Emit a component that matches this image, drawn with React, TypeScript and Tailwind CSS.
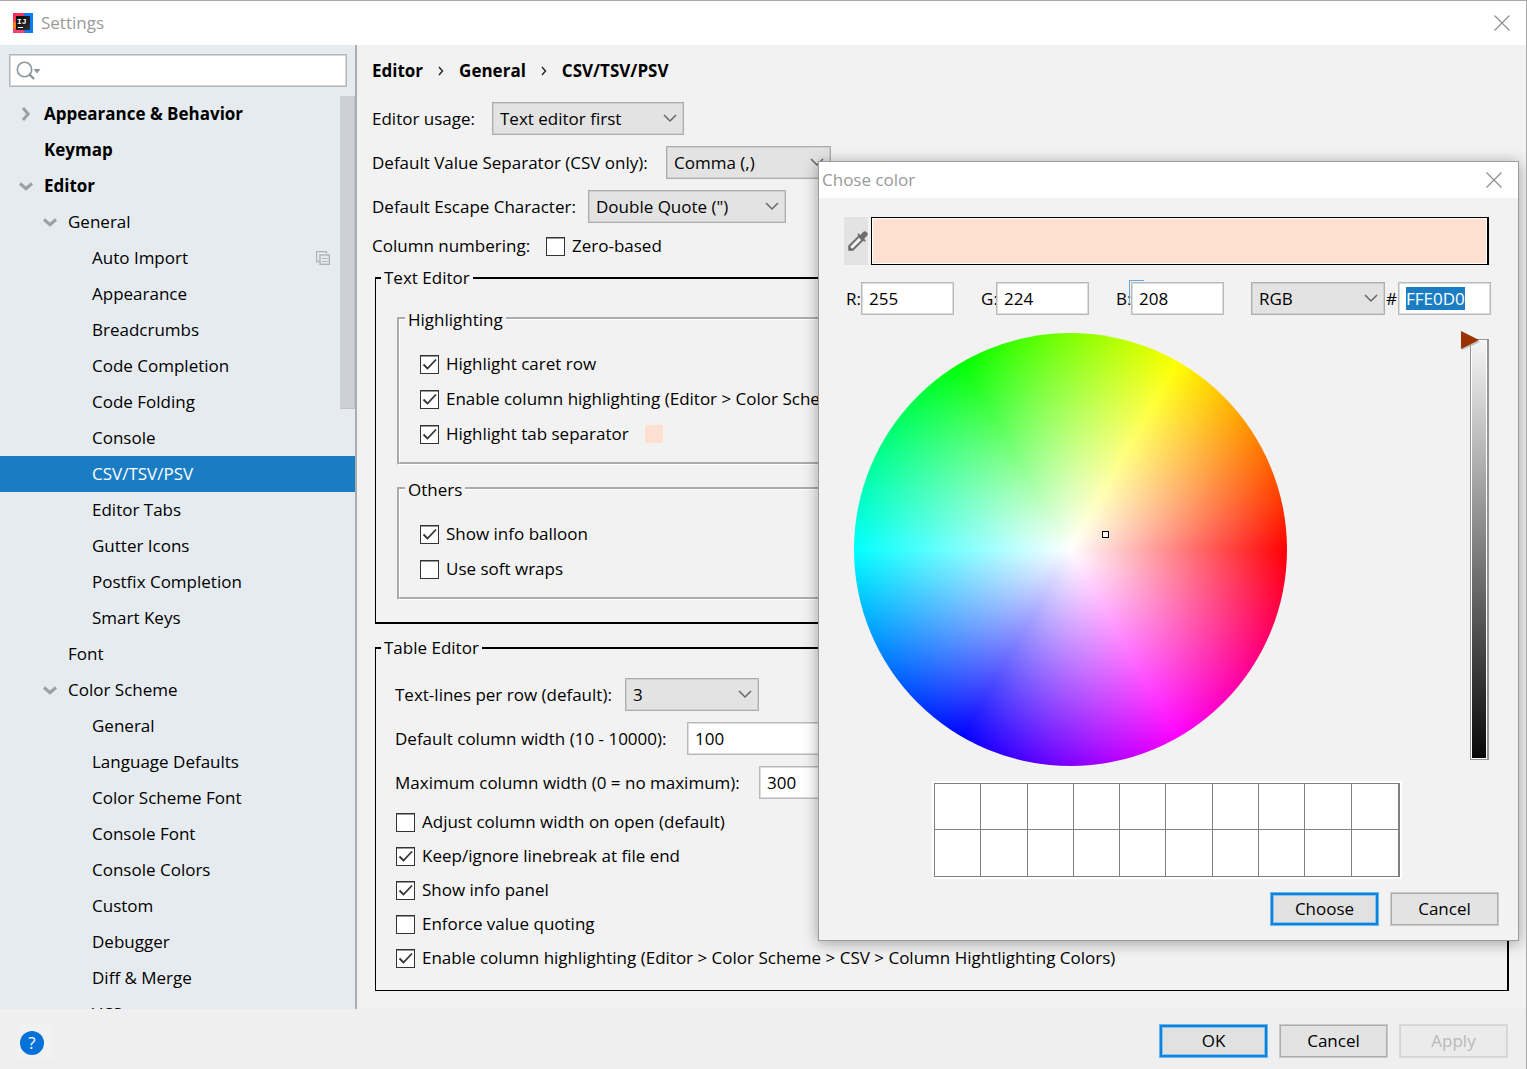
import { useEffect, useRef, type ReactNode } from "react";

type TreeItem = {
  label: string;
  level: 0 | 1 | 2;
  bold?: boolean;
  state?: "open" | "closed";
  selected?: boolean;
  copy?: boolean;
};

const tree: TreeItem[] = [
  { label: "Appearance & Behavior", level: 0, bold: true, state: "closed" },
  { label: "Keymap", level: 0, bold: true },
  { label: "Editor", level: 0, bold: true, state: "open" },
  { label: "General", level: 1, state: "open" },
  { label: "Auto Import", level: 2, copy: true },
  { label: "Appearance", level: 2 },
  { label: "Breadcrumbs", level: 2 },
  { label: "Code Completion", level: 2 },
  { label: "Code Folding", level: 2 },
  { label: "Console", level: 2 },
  { label: "CSV/TSV/PSV", level: 2, selected: true },
  { label: "Editor Tabs", level: 2 },
  { label: "Gutter Icons", level: 2 },
  { label: "Postfix Completion", level: 2 },
  { label: "Smart Keys", level: 2 },
  { label: "Font", level: 1 },
  { label: "Color Scheme", level: 1, state: "open" },
  { label: "General", level: 2 },
  { label: "Language Defaults", level: 2 },
  { label: "Color Scheme Font", level: 2 },
  { label: "Console Font", level: 2 },
  { label: "Console Colors", level: 2 },
  { label: "Custom", level: 2 },
  { label: "Debugger", level: 2 },
  { label: "Diff & Merge", level: 2 },
  { label: "VCS", level: 2 },
];

const indent = { 0: "pl-[14px]", 1: "pl-[38px]", 2: "pl-[62px]" };

function Logo() {
  return (
    <svg width="20" height="20" viewBox="0 0 20 20" aria-hidden="true">
      <defs>
        <linearGradient id="logoInk" x1="0" y1="0" x2="1" y2="1">
          <stop offset="0" stopColor="#000" />
          <stop offset="1" stopColor="#333" />
        </linearGradient>
      </defs>
      <rect width="20" height="20" fill="#087cfa" />
      <path d="M0 0h12l-3 5-5 6-4 1z" fill="#fe315d" />
      <path d="M0 8l4 2v6l-4 1z" fill="#f97a12" />
      <path d="M0 16l4-1 7 2 1 3H0z" fill="#f0426f" />
      <rect x="3" y="3" width="14" height="14" fill="url(#logoInk)" />
      <text x="4" y="11" fontFamily="Liberation Mono, monospace" fontWeight="700" fontSize="8" fill="#fff">
        IJ
      </text>
      <rect x="5" y="14" width="5" height="1" fill="#fff" />
    </svg>
  );
}

function CloseIcon() {
  return (
    <svg width="16" height="16" viewBox="0 0 16 16" aria-hidden="true">
      <path d="M.5.5l15 15M15.5.5l-15 15" stroke="#8b8b8b" strokeWidth="1.1" fill="none" />
    </svg>
  );
}

function Arrow({ state }: { state: "open" | "closed" }) {
  return (
    <svg width="14" height="14" viewBox="0 0 14 14" aria-hidden="true" fill="none" stroke="#9b9fa2" strokeWidth="3">
      {state === "open" ? <path d="M1 4.500l6 5.200 6-5.200" /> : <path d="M4 1l5.200 6L4 13" />}
    </svg>
  );
}

function SelectBox({ id, value, width, label }: { id: string; value: string; width: string; label?: string }) {
  return (
    <span className={`relative flex shrink-0 ${width}`}>
      <select
        id={id}
        aria-label={label}
        defaultValue={value}
        className="h-[33px] w-full appearance-none border border-[#adadad] bg-[#e3e3e3] pl-[7px] shadow-[inset_0_0_0_1px_#cfcfcf] outline-none"
      >
        <option>{value}</option>
      </select>
      <svg className="pointer-events-none absolute right-[7px] top-3" width="14" height="9" viewBox="0 0 14 9" aria-hidden="true">
        <path d="M1 1l6 6 6-6" fill="none" stroke="#666" strokeWidth="1.5" />
      </svg>
    </span>
  );
}

function Check({ label, checked }: { label: string; checked?: boolean }) {
  return (
    <label className="flex h-6 items-center gap-[7px] whitespace-nowrap">
      <span className="relative flex">
        <input
          type="checkbox"
          defaultChecked={checked}
          className="peer size-[19px] appearance-none border border-[#333] bg-white shadow-[inset_0_1px_0_#999]"
        />
        <svg
          className="pointer-events-none absolute inset-0 hidden peer-checked:block"
          width="19"
          height="19"
          viewBox="0 0 19 19"
          aria-hidden="true"
        >
          <path d="M3.5 9.5l4 4L16 4.5" fill="none" stroke="#333" strokeWidth="1.8" />
        </svg>
      </span>
      {label}
    </label>
  );
}

function TextField({ id, value, width }: { id: string; value: string; width: string }) {
  return (
    <input
      id={id}
      type="text"
      defaultValue={value}
      className={`h-[33px] shrink-0 border border-[#b9b9b9] bg-white pl-[7px] shadow-[inset_0_0_0_1px_#dcdcdc] outline-none ${width}`}
    />
  );
}

function PushButton({ children, primary, disabled }: { children: ReactNode; primary?: boolean; disabled?: boolean }) {
  const look = primary
    ? "border-[#6fb4ea] bg-[#e1e1e1] shadow-[inset_0_0_0_2px_#0a84e0,inset_0_0_0_3px_#8fc1e8]"
    : disabled
      ? "border-[#dadada] bg-[#ebebeb] text-[#b9b9b9] shadow-[inset_0_0_0_1px_#d4d4d4]"
      : "border-[#c9c9c9] bg-[#e3e3e3] shadow-[inset_0_0_0_1px_#adadad]";
  return (
    <button type="button" disabled={disabled} className={`h-[34px] w-[109px] border leading-6 ${look}`}>
      {children}
    </button>
  );
}

function InnerGroup({ title, children }: { title: string; children: ReactNode }) {
  return (
    <fieldset className="mr-[21px] border-[3px] border-white [border-style:groove]">
      <legend className="ml-[5px] px-[3px] pt-1">{title}</legend>
      <div className="flex flex-col gap-[11px] pb-4 pl-5 pt-5">{children}</div>
    </fieldset>
  );
}

function Sidebar() {
  return (
    <aside className="relative flex w-[357px] shrink-0 flex-col overflow-hidden border-r-2 border-[#abadb0] bg-[#e6ebef] pt-[9px]">
      <div className="relative ml-[9px] mr-2 flex">
        <input
          type="search"
          aria-label="Search settings"
          className="h-[33px] w-full appearance-none border border-[#b5b8ba] bg-white pl-10 shadow-[inset_0_0_0_1px_#d4d6d8] outline-none"
        />
        <svg
          className="pointer-events-none absolute left-[7px] top-[7px]"
          width="26"
          height="20"
          viewBox="0 0 26 20"
          aria-hidden="true"
        >
          <circle cx="8.5" cy="8.5" r="7.2" fill="none" stroke="#8d979e" strokeWidth="1.6" />
          <path d="M13 13l5 5" stroke="#8d979e" strokeWidth="2.4" />
          <path d="M17.500 8h7l-3.500 4.500z" fill="#8d979e" />
        </svg>
      </div>
      <ul className="mt-[9px]">
        {tree.map((item, i) => (
          <li key={i}>
            <button
              type="button"
              className={`flex h-9 w-full items-center gap-[6px] pr-[25px] text-left ${indent[item.level]} ${
                item.selected ? "bg-[#1a7dc4] text-white" : ""
              } ${item.bold ? "font-bold" : ""}`}
            >
              <span className="flex w-6 shrink-0 justify-center">{item.state && <Arrow state={item.state} />}</span>
              <span className="grow">{item.label}</span>
              {item.copy && (
                <svg width="14" height="14" viewBox="0 0 14 14" fill="none" stroke="#a9b4bb" aria-hidden="true">
                  <path d="M3.500 10.500h-3v-10h10v2" strokeWidth="1.400" />
                  <rect x="4" y="4" width="9.300" height="9.300" strokeWidth="1.400" />
                  <path d="M6 7.500h5.500M6 10.500h5.500" strokeWidth="1.200" />
                </svg>
              )}
            </button>
          </li>
        ))}
      </ul>
      <div className="absolute right-0 top-[51px] h-[313px] w-[15px] border-b border-r border-[#bfc2c7] bg-[#cdd0d6]" />
    </aside>
  );
}

function SettingsPanel() {
  return (
    <main className="min-w-0 grow overflow-hidden bg-[#f2f2f2] pl-[15px] pr-[17px] pt-[14px]">
      <nav aria-label="Breadcrumb" className="flex h-6 items-center gap-[15px] font-bold">
        {["Editor", "General", "CSV/TSV/PSV"].map((c, i) => (
          <span key={c} className="flex items-center gap-[15px]">
            {i > 0 && (
              <svg width="6" height="10" viewBox="0 0 6 10" aria-hidden="true">
                <path d="M1 1l3.500 4L1 9" fill="none" stroke="#222" strokeWidth="1.400" />
              </svg>
            )}
            {c}
          </span>
        ))}
      </nav>

      <div className="mt-[19px] flex flex-col gap-[11px] whitespace-nowrap">
        <div className="flex items-center">
          <label htmlFor="usage" className="w-[120px] shrink-0">Editor usage:</label>
          <SelectBox id="usage" value="Text editor first" width="w-[192px]" />
        </div>
        <div className="flex items-center">
          <label htmlFor="separator" className="w-[294px] shrink-0">Default Value Separator (CSV only):</label>
          <SelectBox id="separator" value="Comma (,)" width="w-[165px]" />
        </div>
        <div className="flex items-center">
          <label htmlFor="escape" className="w-[216px] shrink-0">Default Escape Character:</label>
          <SelectBox id="escape" value={'Double Quote (")'} width="w-[198px]" />
        </div>
        <div className="flex items-center">
          <span className="w-[174px] shrink-0">Column numbering:</span>
          <Check label="Zero-based" />
        </div>
      </div>

      <fieldset className="ml-[3px] mt-2 border-2 border-l border-black">
        <legend className="ml-[5px] px-[3px]">Text Editor</legend>
        <div className="flex flex-col gap-[9px] pb-[22px] pl-[21px] pt-[14px]">
          <InnerGroup title="Highlighting">
            <Check label="Highlight caret row" checked />
            <Check label="Enable column highlighting (Editor > Color Scheme > CSV > Column Hightlighting Colors)" checked />
            <div className="flex items-center gap-4">
              <Check label="Highlight tab separator" checked />
              <button type="button" aria-label="Tab separator color" className="size-[18px] bg-[#ffdfd0]" />
            </div>
          </InnerGroup>
          <InnerGroup title="Others">
            <Check label="Show info balloon" checked />
            <Check label="Use soft wraps" />
          </InnerGroup>
        </div>
      </fieldset>

      <fieldset className="ml-[3px] mt-3 border border-r-2 border-t-2 border-black">
        <legend className="ml-[5px] px-[3px]">Table Editor</legend>
        <div className="flex flex-col gap-[11px] whitespace-nowrap pb-5 pl-[19px] pt-[18px]">
          <div className="flex items-center">
            <label htmlFor="lines" className="w-[230px] shrink-0">Text-lines per row (default):</label>
            <SelectBox id="lines" value="3" width="w-[134px]" />
          </div>
          <div className="flex items-center">
            <label htmlFor="defwidth" className="w-[292px] shrink-0">Default column width (10 - 10000):</label>
            <TextField id="defwidth" value="100" width="w-[200px]" />
          </div>
          <div className="flex items-center">
            <label htmlFor="maxwidth" className="w-[364px] shrink-0">Maximum column width (0 = no maximum):</label>
            <TextField id="maxwidth" value="300" width="w-[200px]" />
          </div>
          <div className="flex flex-col gap-[10px] pl-px">
            <Check label="Adjust column width on open (default)" />
            <Check label="Keep/ignore linebreak at file end" checked />
            <Check label="Show info panel" checked />
            <Check label="Enforce value quoting" />
            <Check label="Enable column highlighting (Editor > Color Scheme > CSV > Column Hightlighting Colors)" checked />
          </div>
        </div>
      </fieldset>
    </main>
  );
}

function ColorDialog() {
  const hex = useRef<HTMLInputElement>(null);
  useEffect(() => {
    hex.current?.focus();
    hex.current?.select();
  }, []);

  return (
    <div
      role="dialog"
      aria-label="Chose color"
      className="absolute right-[7px] top-40 w-[701px] border border-[#9c9c9c] bg-[#f2f2f2] shadow-[0_2px_14px_rgba(0,0,0,0.35)]"
    >
      <header className="flex h-9 items-center justify-between bg-white pl-[3px] pr-4 text-[#999]">
        <span>Chose color</span>
        <button type="button" aria-label="Close color dialog"><CloseIcon /></button>
      </header>

      <div className="mt-[19px] flex gap-[3px] pl-[25px] pr-[29px]">
        <button type="button" aria-label="Pick color from screen" className="flex h-12 w-6 items-center justify-end bg-[#e3e3e3]">
          <svg width="20" height="20" viewBox="0 0 20 20" aria-hidden="true">
            <path d="M1.200 18.800v-3.600L11 5.400 14.600 9 4.800 18.800z" fill="#f2f2f2" stroke="#6e6e6e" strokeWidth="2" />
            <path
              d="M9.200 3.600l1.400-1.400 1.700 1.700 2.600-2.700a2.700 2.700 0 0 1 3.900 3.900l-2.700 2.600 1.700 1.700-1.400 1.400z"
              fill="#6e6e6e"
            />
            <path d="M1 14.500v4.700h4.500z" fill="#6e6e6e" />
          </svg>
        </button>
        <div className="h-12 grow border border-r-2 border-black bg-[#ffdfd0] shadow-[inset_0_0_0_1px_#fff]" />
      </div>

      <div className="mt-[17px] flex items-center justify-between pl-[27px] pr-[27px]">
        {[
          ["R", "255"],
          ["G", "224"],
          ["B", "208"],
        ].map(([name, value]) => (
          <div key={name} className="relative mr-[26px] flex items-center">
            <label htmlFor={`c${name}`} className="w-[15px] whitespace-nowrap">{name}:</label>
            {name === "B" && (
              <span className="absolute left-[13px] top-[-2px] h-6 w-[15px] border-l border-t border-[#66a9dd]" />
            )}
            <TextField id={`c${name}`} value={value} width="relative w-[93px]" />
          </div>
        ))}
        <div className="flex items-center">
          <SelectBox id="model" label="Color model" value="RGB" width="w-[134px]" />
          <label htmlFor="hex" className="w-[13px] text-center">#</label>
          <input
            id="hex"
            ref={hex}
            type="text"
            defaultValue="FFE0D0"
            className="h-[33px] w-[93px] border border-[#b9b9b9] bg-white pl-[7px] leading-6 caret-transparent shadow-[inset_0_0_0_1px_#dcdcdc] outline-none selection:bg-[#1a7dc4] selection:text-white"
          />
        </div>
      </div>

      <div className="mt-[18px] flex justify-between pl-[35px] pr-[29px]">
        <div className="relative size-[433px] rounded-full bg-[radial-gradient(circle_closest-side,#fff,rgba(255,255,255,0)),conic-gradient(from_90deg,#f00,#f0f,#00f,#0ff,#0f0,#ff0,#f00)]">
          <span className="absolute left-[248px] top-[198px] size-[7px] border border-black bg-white" />
        </div>
        <div className="relative mt-[6px] flex">
          <input
            type="range"
            aria-label="Brightness"
            defaultValue={0}
            className="h-[421px] w-[19px] appearance-none border border-r-2 border-[#949494] bg-[linear-gradient(#f5f5f5,#080808)] shadow-[inset_0_0_0_1px_#fff] [writing-mode:vertical-lr] [&::-webkit-slider-thumb]:appearance-none [&::-webkit-slider-thumb]:opacity-0"
          />
          <svg className="pointer-events-none absolute left-[-9px] top-[-8px]" width="20" height="20" viewBox="0 0 20 20" aria-hidden="true">
            <path d="M1 2l18 9-18 8z" fill="#999" opacity=".6" />
            <path d="M0 0l18 9-18 9z" fill="#993300" />
          </svg>
        </div>
      </div>

      <div className="ml-[113px] mt-[15px] grid w-[470px] border-2 border-white bg-white">
        <div className="grid grid-cols-10 border border-b-0 border-r-2 border-[#808080]">
          {Array.from({ length: 20 }, (_, i) => (
            <button
              key={i}
              type="button"
              aria-label={`Recent color ${i + 1}`}
              className={`border-[#808080] ${i % 10 === 9 ? "" : "border-r"} border-b ${i < 10 ? "h-[46px]" : "h-[47px]"}`}
            />
          ))}
        </div>
      </div>

      <div className="mb-[14px] mt-[13px] flex justify-end gap-[11px] pr-[19px]">
        <PushButton primary>Choose</PushButton>
        <PushButton>Cancel</PushButton>
      </div>
    </div>
  );
}

export default function App() {
  return (
    <div className="relative flex h-screen flex-col overflow-hidden border-r border-t border-[#a9a9a9] bg-[#efefef] font-['Open_Sans','Noto_Sans',sans-serif] text-[17px] leading-6 text-black">
      <header className="flex h-11 shrink-0 items-center bg-white pl-[13px] pr-4 text-[#999]">
        <Logo />
        <span className="ml-2 grow">Settings</span>
        <button type="button" aria-label="Close settings"><CloseIcon /></button>
      </header>
      <div className="flex min-h-0 grow">
        <Sidebar />
        <SettingsPanel />
      </div>
      <footer className="flex h-[60px] shrink-0 items-center justify-between px-[18px] pb-1 pt-2">
        <button type="button" aria-label="Help" className="flex size-9 items-center bg-[#f1f1f1] pl-[2px] pt-1">
          <span className="flex size-6 items-center justify-center rounded-full bg-[#0672d9] text-white">?</span>
        </button>
        <div className="flex gap-[11px]">
          <PushButton primary>OK</PushButton>
          <PushButton>Cancel</PushButton>
          <PushButton disabled>Apply</PushButton>
        </div>
      </footer>
      <ColorDialog />
    </div>
  );
}
